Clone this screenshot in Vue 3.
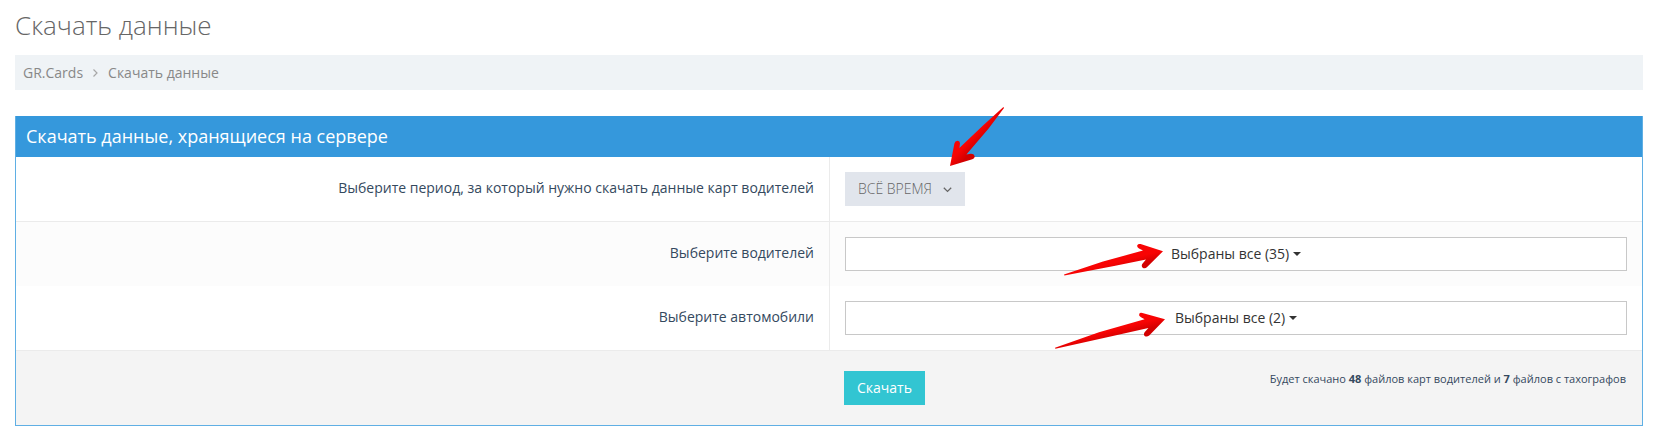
<script setup>
import { ref } from 'vue';

const period = ref('all');
const drivers = ref('all');
const cars = ref('all');

const driversCount = 35;
const carsCount = 2;
const cardFiles = 48;
const tachoFiles = 7;
</script>

<template>
  <div class="page">
    <h1 class="page-title">Скачать данные</h1>

    <nav class="breadcrumb">
      <a href="#">GR.Cards</a>
      <svg class="angle" width="5" height="10" viewBox="0 0 5 10">
        <path d="M.5 1.5 4 5 .5 8.5" fill="none" stroke="#a7a7a7" stroke-width="1.2" />
      </svg>
      <a href="#">Скачать данные</a>
    </nav>

    <form class="portlet" @submit.prevent>
      <h2 class="portlet-title">Скачать данные, хранящиеся на сервере</h2>

      <div class="row bordered">
        <label class="row-label" for="period">Выберите период, за который нужно скачать данные карт водителей</label>
        <div class="row-control">
          <div class="period">
            <select id="period" v-model="period">
              <option value="all">ВСЁ ВРЕМЯ</option>
            </select>
            <svg class="chevron" width="9" height="6" viewBox="0 0 9 6">
              <path d="M.8 .8 4.5 4.4 8.2 .8" fill="none" stroke="#666" stroke-width="1.3" />
            </svg>
            <svg class="arrow arrow-period" width="55" height="60" viewBox="0 0 55 60">
              <defs>
                <linearGradient id="red-a" gradientUnits="userSpaceOnUse" x1="20" y1="24" x2="34" y2="37">
                  <stop offset="0.3" stop-color="#f80404" />
                  <stop offset="0.8" stop-color="#d20000" />
                </linearGradient>
              </defs>
              <path
                d="M53.4 0 33 18.4 9.4 41 10 36.5Q10 34 7.6 33.8 5 34 4.4 36.5L0 59 21.5 52.6Q24.8 51.4 24.7 49.2 24 46.6 20.6 46.8L16.4 47.6 38.6 21.4 54 1Z"
                fill="url(#red-a)"
              />
            </svg>
          </div>
        </div>
      </div>

      <div class="row odd">
        <label class="row-label" for="drivers">Выберите водителей</label>
        <div class="row-control">
          <div class="multi">
            <div class="multi-value">
              <select id="drivers" v-model="drivers">
                <option value="all">Выбраны все ({{ driversCount }})</option>
              </select>
              <span class="caret"></span>
              <svg class="arrow arrow-drivers" width="100" height="34" viewBox="0 0 100 34">
                <defs>
                  <linearGradient id="red-b" gradientUnits="userSpaceOnUse" x1="46" y1="10" x2="51" y2="30">
                    <stop offset="0.5" stop-color="#f80404" />
                    <stop offset="0.9" stop-color="#d20000" />
                  </linearGradient>
                </defs>
                <path
                  d="M0 31.6 39 18.4 79 7.6 75 5.6Q72.6 4 73.3 2.2 74.2 .5 76.6 1.1L99 8.2 83.4 23.8Q81.2 26 79 25 77 23.6 78.2 21L82 16.4 50 22.9 .4 32.6Z"
                  fill="url(#red-b)"
                />
              </svg>
            </div>
          </div>
        </div>
      </div>

      <div class="row bordered">
        <label class="row-label" for="cars">Выберите автомобили</label>
        <div class="row-control">
          <div class="multi">
            <div class="multi-value">
              <select id="cars" v-model="cars">
                <option value="all">Выбраны все ({{ carsCount }})</option>
              </select>
              <span class="caret"></span>
              <svg class="arrow arrow-cars" width="111" height="38" viewBox="0 0 111 38">
                <path
                  d="M0 35.8 44 20.2 89.6 7.3 86 5.2Q83.4 3.8 84.2 1.9 85 .3 87.4 1L110 7.2 94.2 23.4Q92 25.2 90 24.2 88 22.6 89.6 20.2L93.4 16 60 23.4 .4 36.8Z"
                  fill="url(#red-b)"
                />
              </svg>
            </div>
          </div>
        </div>
      </div>

      <div class="actions">
        <div class="actions-right">
          <button type="submit" class="btn-download">Скачать</button>
          <p class="summary">
            Будет скачано <b>{{ cardFiles }}</b> файлов карт водителей и <b>{{ tachoFiles }}</b> файлов с тахографов
          </p>
        </div>
      </div>
    </form>
  </div>
</template>

<style>
body {
  background: #fff;
}
</style>

<style scoped>
.page {
  padding: 8px 17px 20px 15px;
  font-family: "Open Sans", sans-serif;
  font-size: 14px;
  line-height: 20px;
  color: #34495e;
}

.page-title {
  margin: 0 0 13px;
  font-size: 26px;
  line-height: 34px;
  font-weight: 300;
  color: #666;
}

.breadcrumb {
  display: flex;
  align-items: center;
  gap: 10px;
  height: 35px;
  padding: 0 8px;
  margin-bottom: 26px;
  background: #eff3f6;
}
.breadcrumb a { color: #888; text-decoration: none; }

/* Portlet */
.portlet { border: 1px solid #5fafe4; border-top: 0; }
.portlet-title {
  margin: 0;
  padding: 10px;
  font-size: 18px;
  line-height: 21px;
  font-weight: 400;
  color: #fff;
  background: #3598dc;
}

/* Form rows */
.row { display: grid; grid-template-columns: 1fr 1fr; }
.row.bordered { border-bottom: 1px solid #ebebeb; }
.row.odd { background: #fcfcfc; }
.row-label { padding: 21px 15px 0; text-align: right; }
.row-control { padding: 15px; border-left: 1px solid #ebebeb; }

select {
  appearance: none;
  margin: 0;
  padding: 0;
  border: 0;
  background: transparent;
  font: inherit;
  color: #333;
  cursor: pointer;
}

.period { position: relative; width: 120px; height: 34px; background: #e1e5ec; }
.period select { width: 100%; height: 100%; padding: 0 13px; font-weight: 300; color: #666; }
.chevron { position: absolute; top: 15px; right: 13px; pointer-events: none; }

.multi {
  display: flex;
  align-items: center;
  justify-content: center;
  height: 34px;
  box-sizing: border-box;
  border: 1px solid #c8c8c8;
  background: #fff;
}
.multi-value { position: relative; display: flex; align-items: center; gap: 3px; }
.caret {
  border-top: 4px solid #333;
  border-left: 4px solid transparent;
  border-right: 4px solid transparent;
}

/* Hint arrows over the controls */
.arrow { position: absolute; pointer-events: none; }
.arrow-period { left: 105px; top: -65px; }
.arrow-drivers { right: 100%; top: -1px; margin-right: 7px; }
.arrow-cars { right: 100%; top: 4px; margin-right: 9px; }

/* Footer */
.actions { display: grid; grid-template-columns: 1fr 1fr; background: #f4f4f4; }
.actions-right {
  grid-column: 2;
  display: flex;
  align-items: flex-start;
  justify-content: space-between;
  padding: 20px 16px 20px 15px;
}
.btn-download {
  height: 34px;
  padding: 0 13px;
  border: 0;
  font: inherit;
  color: #fff;
  background: #32c5d2;
  cursor: pointer;
}
.summary { margin: 0; font-size: 11px; line-height: 16px; }
</style>
